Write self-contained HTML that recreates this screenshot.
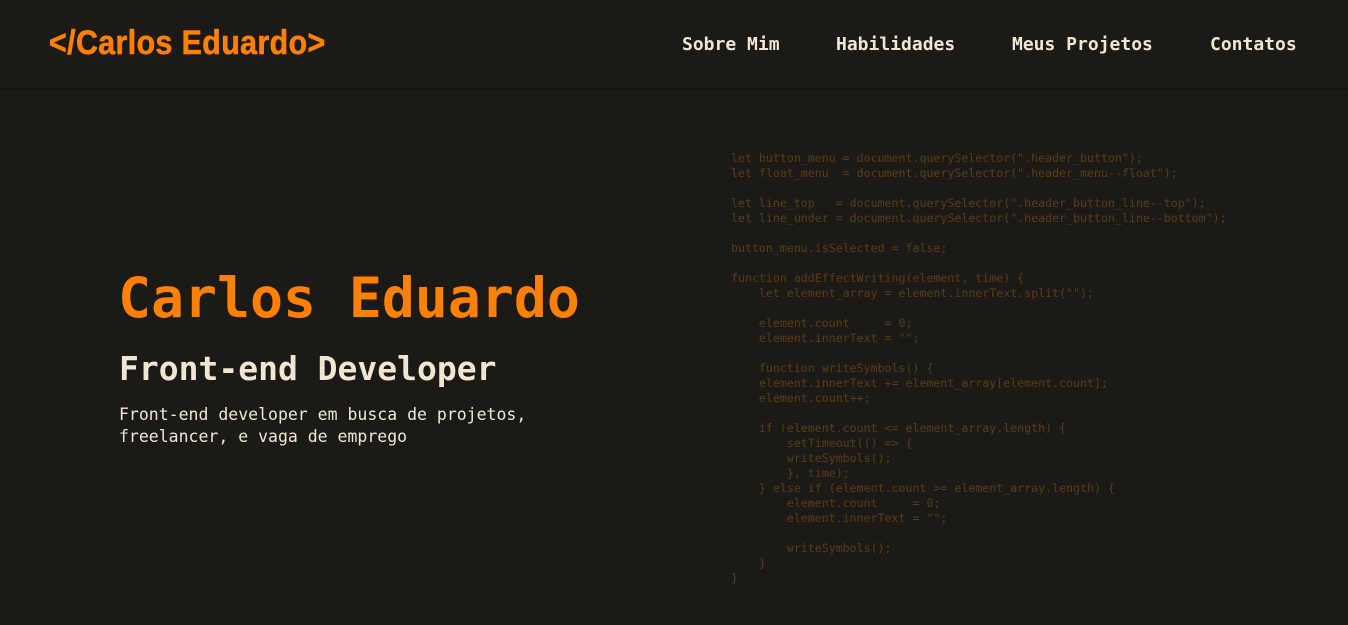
<!DOCTYPE html>
<html><head><meta charset="utf-8"><style>
html,body{margin:0;padding:0;background:#1c1a17;width:1348px;height:625px;overflow:hidden}
header{position:absolute;left:0;top:0;width:1348px;height:88px;border-bottom:2px solid #161412;background:#1c1a17}
.logo{position:absolute;left:49px;top:24px;font-family:"Liberation Sans",sans-serif;font-weight:bold;font-size:34px;color:#ff8000;transform:scaleX(0.89);transform-origin:left top;white-space:nowrap;letter-spacing:0.5px;-webkit-text-stroke:0.6px #ff8000}
nav a{position:absolute;top:34px;font-family:"DejaVu Sans Mono","Liberation Mono",monospace;font-weight:bold;font-size:18px;color:#f1e6d2;text-decoration:none;white-space:nowrap}
.mono{font-family:"DejaVu Sans Mono","Liberation Mono",monospace;position:absolute;white-space:pre}
h1{margin:0;left:118px;top:266px;font-size:54.8px;font-weight:bold;color:#ff8000}
h2{margin:0;left:119px;top:349px;font-size:33px;font-weight:bold;color:#f1e6d2}
.d{left:119px;top:404px;font-size:16.5px;line-height:22px;color:#f1e6d2}
pre{margin:0;left:731px;top:151px;font-size:11.6px;line-height:15px;color:#5a3d17}
</style></head><body>
<header>
<div class="logo">&lt;/Carlos Eduardo&gt;</div>
<nav><a style="left:682px">Sobre Mim</a><a style="left:836px">Habilidades</a><a style="left:1012px">Meus Projetos</a><a style="left:1210px">Contatos</a></nav>
</header>
<h1 class="mono">Carlos Eduardo</h1>
<h2 class="mono">Front-end Developer</h2>
<div class="mono d">Front-end developer em busca de projetos,
freelancer, e vaga de emprego</div>
<pre class="mono">let button_menu = document.querySelector(".header_button");
let float_menu  = document.querySelector(".header_menu--float");

let line_top   = document.querySelector(".header_button_line--top");
let line_under = document.querySelector(".header_button_line--bottom");

button_menu.isSelected = false;

function addEffectWriting(element, time) {
    let element_array = element.innerText.split("");

    element.count     = 0;
    element.innerText = "";

    function writeSymbols() {
    element.innerText += element_array[element.count];
    element.count++;

    if (element.count &lt;= element_array.length) {
        setTimeout(() =&gt; {
        writeSymbols();
        }, time);
    } else if (element.count &gt;= element_array.length) {
        element.count     = 0;
        element.innerText = "";

        writeSymbols();
    }
}</pre>
</body></html>
